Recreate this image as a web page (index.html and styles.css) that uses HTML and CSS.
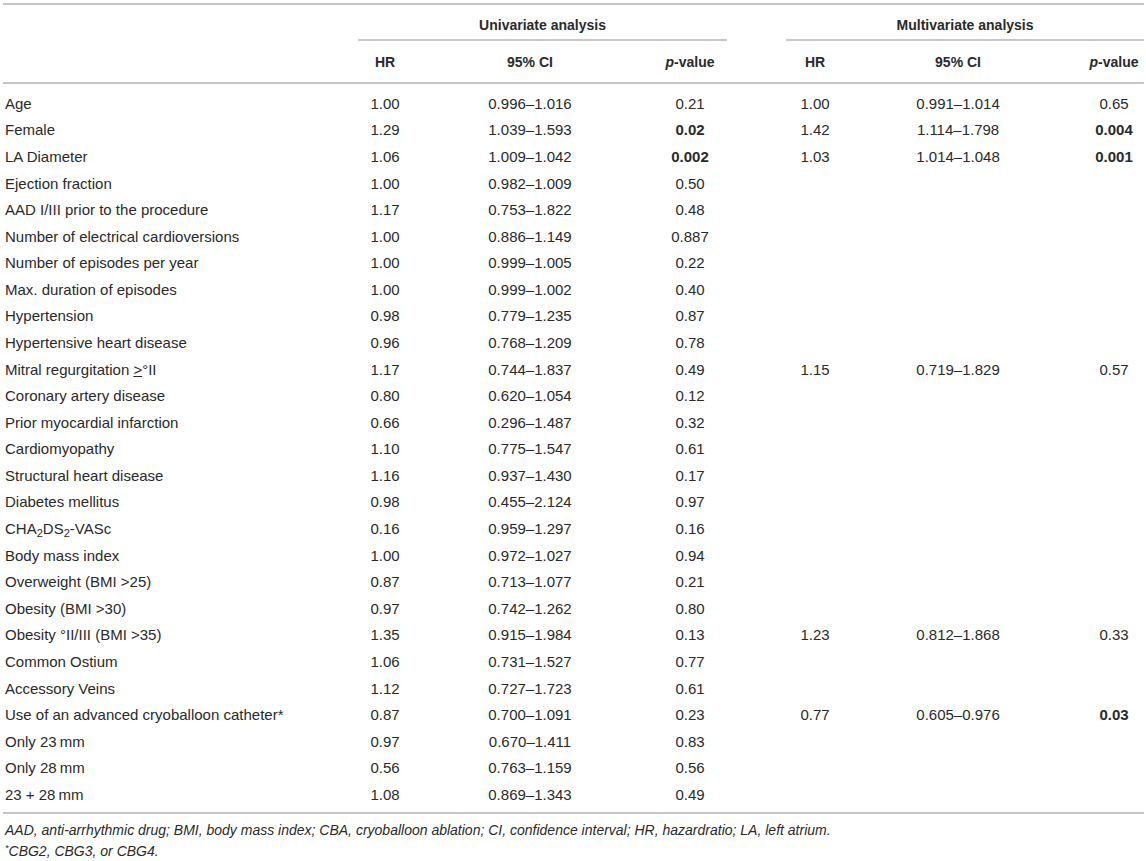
FILE: index.html
```html
<!DOCTYPE html>
<html>
<head>
<meta charset="utf-8">
<link rel="stylesheet" href="styles.css">
</head>
<body>
<div class="wrap">
<table class="tbl">
<colgroup>
<col class="c-label"><col class="c-hr"><col class="c-ci"><col class="c-p"><col class="c-hr2"><col class="c-ci2"><col class="c-p2">
</colgroup>
<thead>
<tr class="grp">
<th></th>
<th colspan="3"><div class="gline uni">Univariate analysis</div></th>
<th colspan="3"><div class="gline multi">Multivariate analysis</div></th>
</tr>
<tr class="cols">
<th></th>
<th>HR</th><th>95% CI</th><th class="pv"><i>p</i>-value</th>
<th>HR</th><th>95% CI</th><th class="pv2"><i>p</i>-value</th>
</tr>
</thead>
<tbody>
<tr class="spacer top"><td colspan="7"></td></tr>
<tr><td>Age</td><td>1.00</td><td>0.996–1.016</td><td>0.21</td><td>1.00</td><td>0.991–1.014</td><td class="pv2">0.65</td></tr>
<tr><td>Female</td><td>1.29</td><td>1.039–1.593</td><td><b>0.02</b></td><td>1.42</td><td>1.114–1.798</td><td class="pv2"><b>0.004</b></td></tr>
<tr><td>LA Diameter</td><td>1.06</td><td>1.009–1.042</td><td><b>0.002</b></td><td>1.03</td><td>1.014–1.048</td><td class="pv2"><b>0.001</b></td></tr>
<tr><td>Ejection fraction</td><td>1.00</td><td>0.982–1.009</td><td>0.50</td><td></td><td></td><td></td></tr>
<tr><td>AAD I/III prior to the procedure</td><td>1.17</td><td>0.753–1.822</td><td>0.48</td><td></td><td></td><td></td></tr>
<tr><td>Number of electrical cardioversions</td><td>1.00</td><td>0.886–1.149</td><td>0.887</td><td></td><td></td><td></td></tr>
<tr><td>Number of episodes per year</td><td>1.00</td><td>0.999–1.005</td><td>0.22</td><td></td><td></td><td></td></tr>
<tr><td>Max. duration of episodes</td><td>1.00</td><td>0.999–1.002</td><td>0.40</td><td></td><td></td><td></td></tr>
<tr><td>Hypertension</td><td>0.98</td><td>0.779–1.235</td><td>0.87</td><td></td><td></td><td></td></tr>
<tr><td>Hypertensive heart disease</td><td>0.96</td><td>0.768–1.209</td><td>0.78</td><td></td><td></td><td></td></tr>
<tr><td>Mitral regurgitation <span class="ge">&gt;</span>°II</td><td>1.17</td><td>0.744–1.837</td><td>0.49</td><td>1.15</td><td>0.719–1.829</td><td class="pv2">0.57</td></tr>
<tr><td>Coronary artery disease</td><td>0.80</td><td>0.620–1.054</td><td>0.12</td><td></td><td></td><td></td></tr>
<tr><td>Prior myocardial infarction</td><td>0.66</td><td>0.296–1.487</td><td>0.32</td><td></td><td></td><td></td></tr>
<tr><td>Cardiomyopathy</td><td>1.10</td><td>0.775–1.547</td><td>0.61</td><td></td><td></td><td></td></tr>
<tr><td>Structural heart disease</td><td>1.16</td><td>0.937–1.430</td><td>0.17</td><td></td><td></td><td></td></tr>
<tr><td>Diabetes mellitus</td><td>0.98</td><td>0.455–2.124</td><td>0.97</td><td></td><td></td><td></td></tr>
<tr><td>CHA<sub>2</sub>DS<sub>2</sub>-VASc</td><td>0.16</td><td>0.959–1.297</td><td>0.16</td><td></td><td></td><td></td></tr>
<tr><td>Body mass index</td><td>1.00</td><td>0.972–1.027</td><td>0.94</td><td></td><td></td><td></td></tr>
<tr><td>Overweight (BMI &gt;25)</td><td>0.87</td><td>0.713–1.077</td><td>0.21</td><td></td><td></td><td></td></tr>
<tr><td>Obesity (BMI &gt;30)</td><td>0.97</td><td>0.742–1.262</td><td>0.80</td><td></td><td></td><td></td></tr>
<tr><td>Obesity °II/III (BMI &gt;35)</td><td>1.35</td><td>0.915–1.984</td><td>0.13</td><td>1.23</td><td>0.812–1.868</td><td class="pv2">0.33</td></tr>
<tr><td>Common Ostium</td><td>1.06</td><td>0.731–1.527</td><td>0.77</td><td></td><td></td><td></td></tr>
<tr><td>Accessory Veins</td><td>1.12</td><td>0.727–1.723</td><td>0.61</td><td></td><td></td><td></td></tr>
<tr><td>Use of an advanced cryoballoon catheter*</td><td>0.87</td><td>0.700–1.091</td><td>0.23</td><td>0.77</td><td>0.605–0.976</td><td class="pv2"><b>0.03</b></td></tr>
<tr><td>Only 23&thinsp;mm</td><td>0.97</td><td>0.670–1.411</td><td>0.83</td><td></td><td></td><td></td></tr>
<tr><td>Only 28&thinsp;mm</td><td>0.56</td><td>0.763–1.159</td><td>0.56</td><td></td><td></td><td></td></tr>
<tr><td>23 + 28&thinsp;mm</td><td>1.08</td><td>0.869–1.343</td><td>0.49</td><td></td><td></td><td></td></tr>
<tr class="spacer bottom"><td colspan="7"></td></tr>
</tbody>
</table>
<div class="notes">
<p>AAD, anti-arrhythmic drug; BMI, body mass index; CBA, cryoballoon ablation; CI, confidence interval; HR, hazardratio; LA, left atrium.</p>
<p><sup>*</sup>CBG2, CBG3, or CBG4.</p>
</div>
</div>
</body>
</html>
```
FILE: styles.css
```css
html, body {
  margin: 0;
  padding: 0;
  background: #ffffff;
}
body {
  font-family: "Liberation Sans", Arial, sans-serif;
  font-size: 15px;
  color: #2a2a2a;
}
.wrap {
  padding: 3px 2px 0 3px;
}
.tbl {
  width: 1141px;
  border-collapse: collapse;
  table-layout: fixed;
  border-top: 2px solid #c6c6c6;
  border-bottom: 2px solid #c6c6c6;
}
.c-label { width: 327px; }
.c-hr { width: 110px; }
.c-ci { width: 180px; }
.c-p { width: 140px; }
.c-hr2 { width: 110px; }
.c-ci2 { width: 176px; }
.c-p2 { width: 98px; }
.tbl th, .tbl td {
  padding: 0;
  text-align: center;
  line-height: 17px;
  white-space: nowrap;
  vertical-align: middle;
}
.tbl td:first-child {
  text-align: left;
  padding-left: 2px;
}
.tbl th {
  font-weight: bold;
  font-size: 14px;
  line-height: 16px;
}
.grp th {
  height: 36px;
  vertical-align: bottom;
}
.gline {
  border-bottom: 2px solid #c6c6c6;
  padding-bottom: 6px;
}
.gline.uni {
  margin-left: 28px;
  margin-right: 33px;
}
.gline.multi {
  margin-left: 26px;
  margin-right: 0;
}
.cols th {
  height: 41px;
  border-bottom: 2px solid #c6c6c6;
}
.tbl th i {
  font-style: italic;
}
.tbl .pv2 {
  padding-left: 38px;
}
.tbl tbody tr {
  height: 26.58px;
}
.tbl tbody tr.spacer.top {
  height: 7px;
}
.tbl tbody tr.spacer.bottom {
  height: 5px;
}
.tbl tbody tr.spacer td {
  padding: 0;
  line-height: 0;
}
.ge {
  text-decoration: underline;
  text-underline-offset: 1px;
}
sub {
  font-size: 11px;
  line-height: 0;
  vertical-align: -3px;
}
.notes {
  padding: 6px 0 0 2px;
  font-style: italic;
  font-size: 14px;
}
.notes p {
  margin: 0;
  line-height: 21px;
}
.notes sup {
  font-size: 9px;
  line-height: 0;
  vertical-align: 5px;
}
```
